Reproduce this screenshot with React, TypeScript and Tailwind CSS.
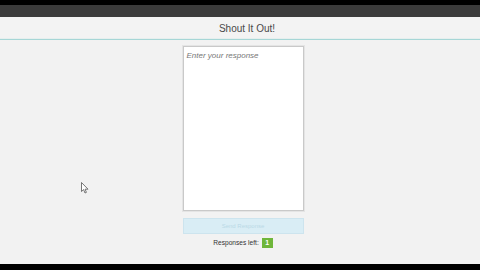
import React from "react";

function Cursor() {
  return (
    <svg width="8" height="12" viewBox="0 0 8 12" className="absolute left-[81px] top-[182px]">
      <path d="M0.5 0.5 L0.5 9.5 L2.6 7.6 L4 11 L5.4 10.4 L4.1 7.2 L7 7.2 Z" fill="#fff" stroke="#555" strokeWidth="0.8" />
    </svg>
  );
}

export default function App() {
  return (
    <div className="relative w-[480px] h-[270px] flex flex-col bg-[#f2f2f2] overflow-hidden font-['Liberation_Sans',Arial,sans-serif]">
      <div className="h-[5px] bg-black shrink-0" />
      <div className="h-[12px] bg-[#3b3b3b] shrink-0" />
      <div className="h-[22px] shrink-0 flex items-center justify-center bg-[#f3f3f3] border-b border-[#e6efee]">
        <span className="text-[10px] text-[#4a4a4a] ml-[14px] mt-[1px]">Shout It Out!</span>
      </div>
      <div className="h-[1px] bg-[#a6d6d6] shrink-0" />
      <div className="flex-1 flex flex-col items-center pt-[6px] ml-[6px]">
        <textarea
          className="w-[121px] h-[165px] bg-white border border-[#c9c9c9] outline outline-1 outline-[#e4e4e4] resize-none px-[3px] py-[3px] text-[8px] italic text-[#555] placeholder:text-[#777]"
          placeholder="Enter your response"
        />
        <button className="mt-[7px] w-[121px] h-[16px] bg-[#d9edf5] border border-[#cde4ee] text-[6px] text-[#b9d9e6]">
          Send Response
        </button>
        <div className="mt-[4px] flex items-center gap-[3px] text-[6.6px] text-[#333]">
          <span>Responses left:</span>
          <span className="w-[11px] h-[10px] bg-[#6fb63b] text-white flex items-center justify-center text-[7px] font-bold">1</span>
        </div>
      </div>
      <div className="h-[6px] bg-black shrink-0" />
      <Cursor />
    </div>
  );
}
